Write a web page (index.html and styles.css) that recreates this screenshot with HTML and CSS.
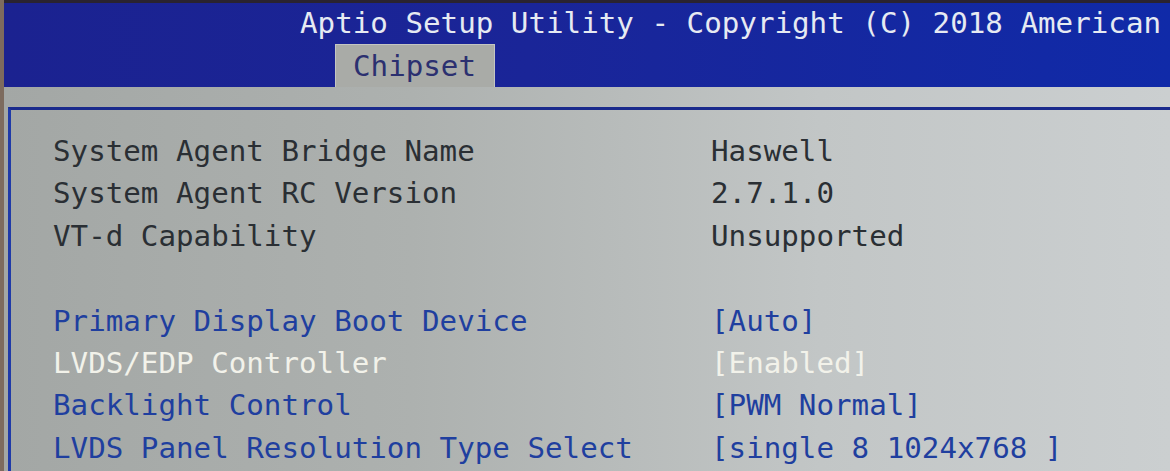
FILE: index.html
```html
<!DOCTYPE html>
<html>
<head>
<meta charset="utf-8">
<link rel="stylesheet" href="styles.css">
</head>
<body>
<div class="screen">
  <header class="header">
    <div class="title">Aptio Setup Utility - Copyright (C) 2018 American</div>
    <div class="tabs"><div class="tab">Chipset</div></div>
  </header>
  <div class="gap"></div>
  <main class="frame">
    <div class="rows">
      <div class="row"><span class="label">System Agent Bridge Name</span><span class="value">Haswell</span></div>
      <div class="row"><span class="label">System Agent RC Version</span><span class="value">2.7.1.0</span></div>
      <div class="row"><span class="label">VT-d Capability</span><span class="value">Unsupported</span></div>
      <div class="row blank"></div>
      <div class="row opt"><span class="label">Primary Display Boot Device</span><span class="value">[Auto]</span></div>
      <div class="row opt sel"><span class="label">LVDS/EDP Controller</span><span class="value">[Enabled]</span></div>
      <div class="row opt"><span class="label">Backlight Control</span><span class="value">[PWM Normal]</span></div>
      <div class="row opt"><span class="label">LVDS Panel Resolution Type Select</span><span class="value">[single 8 1024x768 ]</span></div>
    </div>
  </main>
</div>
</body>
</html>
```
FILE: styles.css
```css
html, body {
  margin: 0;
  padding: 0;
  width: 1170px;
  height: 471px;
  overflow: hidden;
}
body {
  background: #b9bcbb;
  font-family: "DejaVu Sans Mono", "Liberation Mono", monospace;
}
.screen {
  width: 1170px;
  height: 471px;
  display: flex;
  flex-direction: column;
  background: linear-gradient(90deg, #a3a7a5 0%, #adb1af 35%, #c2c6c6 70%, #cbcfd0 100%);
  border-left: 4px solid #7d6b5e;
  box-sizing: border-box;
}
.header {
  height: 87px;
  background: linear-gradient(90deg, #1b2290 0%, #1a2598 45%, #102aa8 100%);
  border-top: 3px solid #2a2330;
  box-sizing: border-box;
  display: flex;
  flex-direction: column;
}
.title {
  height: 40px;
  line-height: 40px;
  padding-left: 296px;
  color: #e6eaf2;
  font-size: 29.2px;
  white-space: nowrap;
}
.tabs {
  display: flex;
  padding-left: 331px;
  flex: 1;
  align-items: flex-end;
}
.tab {
  width: 160px;
  height: 43px;
  box-sizing: border-box;
  background: #a9aba7;
  border: 1px solid #c4c6c2;
  border-bottom: none;
  color: #2b3070;
  font-size: 29.2px;
  line-height: 43px;
  padding-left: 17px;
}
.gap {
  height: 20px;
}
.frame {
  flex: 1;
  margin-left: 4px;
  border-top: 3px solid #1a2a8c;
  border-left: 3px solid #1f3aa8;
  padding: 20px 0 0 42px;
}
.rows {
  display: flex;
  flex-direction: column;
}
.row {
  display: grid;
  grid-template-columns: 658px auto;
  height: 42.4px;
  line-height: 42.4px;
  font-size: 29.2px;
  color: #2a2f34;
  white-space: nowrap;
}
.row.opt {
  color: #1f3f9f;
}
.row.sel {
  color: #f2f2ea;
}
```
